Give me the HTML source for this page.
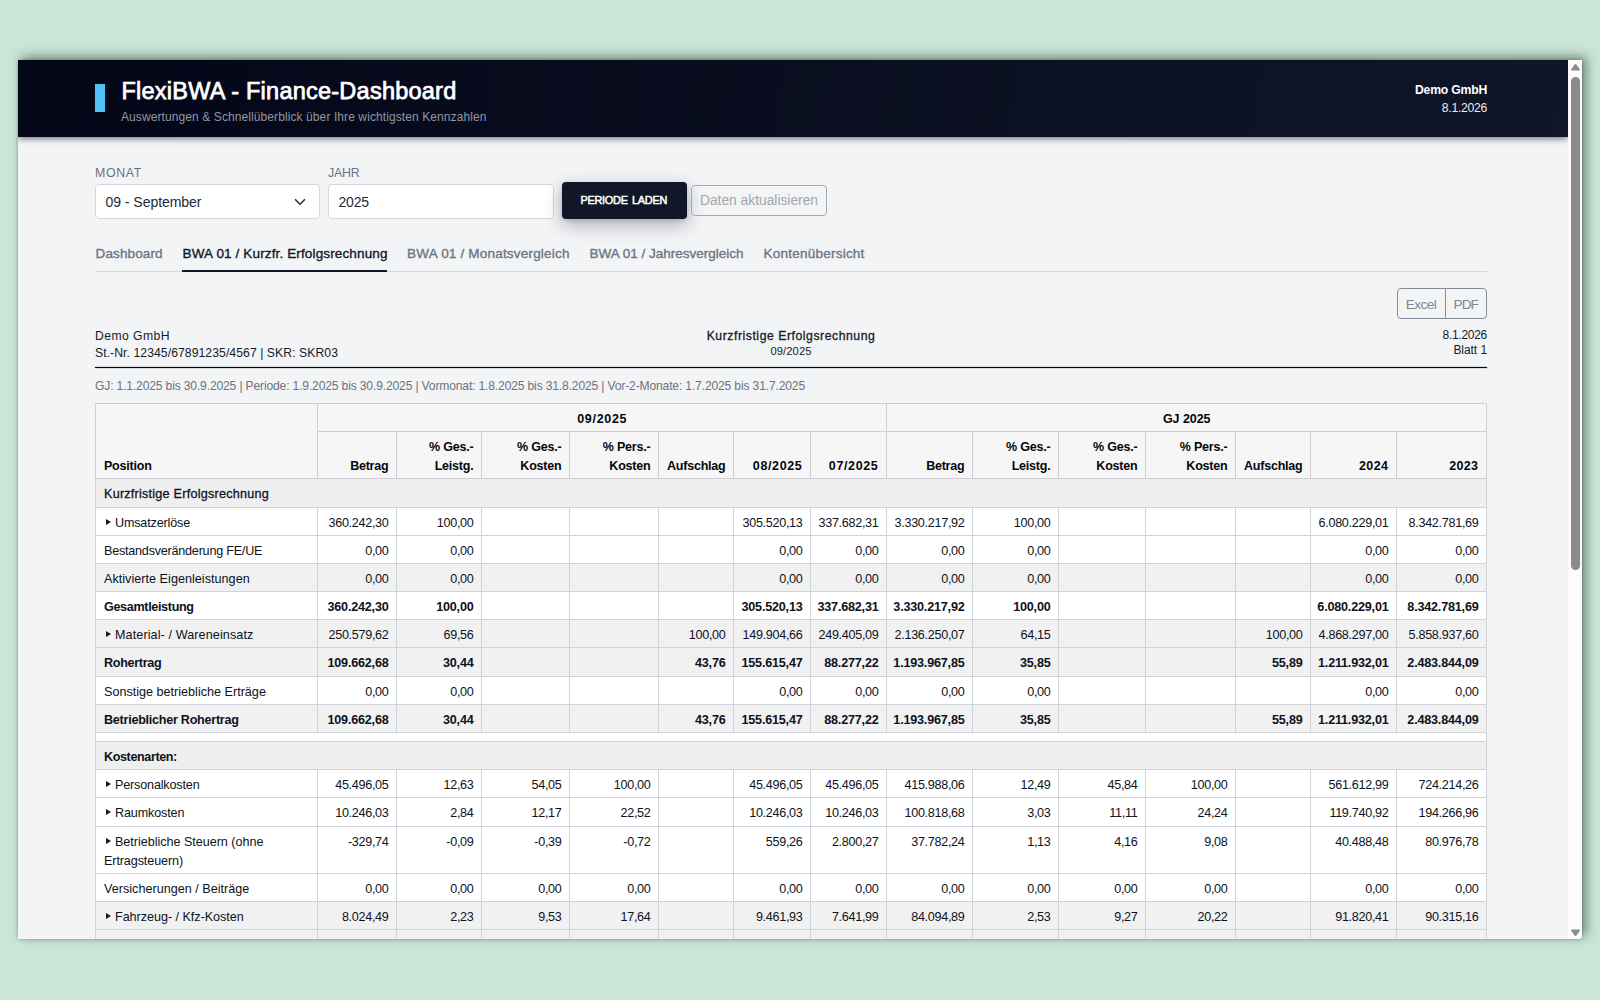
<!DOCTYPE html>
<html lang="de">
<head>
<meta charset="utf-8">
<title>FlexiBWA - Finance-Dashboard</title>
<style>
*{box-sizing:border-box}
html,body{margin:0;padding:0}
body{width:1600px;height:1000px;overflow:hidden;background:#c9e6d7;font-family:"Liberation Sans",Arial,sans-serif;color:#111827;position:relative}
.win{position:absolute;left:18px;top:60px;width:1564px;height:879px;background:#f3f4f6;overflow:hidden;border-radius:0 0 4px 0}
.winshadow{position:absolute;left:18px;top:60px;width:1564px;height:879px;border-radius:0 0 4px 0;box-shadow:4px -3px 12px rgba(0,0,0,.45),0 0 3px rgba(0,0,0,.25)}
.abs{position:absolute;left:-18px;top:-60px;width:1600px;height:1000px}
.abs>*{position:absolute}
.t{white-space:nowrap;line-height:1}
h1,p{margin:0}
button{font-family:inherit;padding:0;margin:0;border:0;background:none;letter-spacing:0}
header.top{left:18px;top:60px;width:1550px;height:77px;background:linear-gradient(100deg,#030617 0%,#101628 100%);box-shadow:0 1.5px 6px rgba(15,23,42,.55)}
.bar{left:95px;top:84px;width:10px;height:28px;background:#4fc1f6}
.title{left:121.5px;top:77px;font-size:23.5px;font-weight:400;-webkit-text-stroke:.75px #fff;color:#fff;line-height:28px}
.sub{left:121px;top:110px;font-size:12px;color:#9197a3;line-height:14px}
.hr1{right:113px;top:83px;font-size:12.2px;font-weight:700;color:#fff;line-height:14px;text-align:right}
.hr2{right:113px;top:101px;font-size:12.2px;color:#e9ebef;line-height:14px;text-align:right}
.lbl{font-size:12.4px;color:#6b7280;line-height:14px;top:165.5px}
.field{top:184px;height:35px;background:#fff;border:1px solid #d3d6db;border-radius:4px;font-size:14px;line-height:34px;padding-left:9.5px;color:#1f2937}
.btn1{left:562px;top:182px;width:125px;height:36.5px;background:#111728;border-radius:4px;color:#fff;font-weight:400;-webkit-text-stroke:.5px #fff;font-size:10.9px;word-spacing:1.5px;line-height:36.5px;text-align:center;padding-right:1.5px;box-shadow:0 6px 18px rgba(15,23,42,.3),0 2px 5px rgba(15,23,42,.12)}
.btn2{left:691px;top:185px;width:136px;height:31px;border:1px solid #a3a8af;border-radius:4px;color:#a1a6ad;font-size:13.8px;line-height:30px;text-align:center}
.tab{top:246px;font-size:13.5px;font-weight:400;-webkit-text-stroke:.35px currentColor;color:#6d7582;margin-left:.6px;line-height:16px}
.tab.on{color:#111827}
.tabline{left:95px;top:271px;width:1392px;height:1px;background:#d6d9de}
.tabon{left:182px;top:269.5px;width:205px;height:2.5px;background:#111827}
.grpbtn{left:1397px;top:288px;width:90px;height:31px;border:1px solid #858d99;border-radius:4px;color:#7d8694;font-size:13.6px;line-height:32.6px}
.grpbtn span{position:absolute;top:0}
.grpbtn i{position:absolute;left:47px;top:0;width:1px;height:29px;background:#858d99}
.inf{font-size:12.2px;line-height:14px;color:#161b26}
.rule{left:95px;top:367px;width:1392px;height:1px;background:#05070b;box-shadow:0 0 0 .2px rgba(0,0,0,.5)}
.per{left:95px;top:379px;font-size:12.1px;line-height:14px;color:#6b7280}
/* table */
.tblwrap{left:95px;top:403px;width:1392px}
table.bwa{border-collapse:collapse;table-layout:fixed;width:1392px;font-size:12.6px;line-height:19px;color:#0d1220;background:#fff}
table.bwa th,table.bwa td{border:1px solid #d1d3da;padding:0 7.5px 0 8px;text-align:right;vertical-align:top;white-space:nowrap;overflow:hidden}
table.bwa th{padding-right:7.6px;background:#f6f6f7;font-weight:700;vertical-align:bottom;padding-bottom:1.8px;color:#05070c;border-color:#cfcfd3;font-size:12.5px;letter-spacing:-.22px}
table.bwa th.pos{text-align:left}
table.bwa th.grp{text-align:center;vertical-align:middle;padding-bottom:0;padding-top:4px}
table.bwa td{padding-top:6px;padding-left:3px;letter-spacing:-.3px}
table.bwa td.l{padding-left:8px;text-align:left;letter-spacing:0;white-space:normal}
table.bwa tr.g td{background:#f1f1f2}
table.bwa tr.sec td{padding-left:8px;background:#efeff0;text-align:left;letter-spacing:0;-webkit-text-stroke:.3px #111827}
table.bwa tr.b td{font-weight:700;letter-spacing:-.2px}
table.bwa tr.sec.b td{-webkit-text-stroke:0}
table.bwa tr.sp td{padding:0}
.tri{display:inline-block;width:0;height:0;border-left:5.2px solid #111827;border-top:3px solid transparent;border-bottom:3px solid transparent;margin:0 3.6px 2.3px 2.4px}
/* scrollbar */
.sbar{left:1568px;top:60px;width:14px;height:879px;background:#fcfcfc}
.sthumb{left:1571px;top:77px;width:9px;height:493px;border-radius:4.5px;background:#8b8b8b}
</style>
</head>
<body>
<div class="winshadow"></div>
<div class="win"><div class="abs">

<header class="top"></header>
<div class="bar"></div>
<h1 class="title t"><span style="letter-spacing:0.241px">FlexiBWA - Finance-Dashboard</span></h1>
<p class="sub t"><span style="letter-spacing:0.093px">Auswertungen &amp; Schnellüberblick über Ihre wichtigsten Kennzahlen</span></p>
<div class="hr1 t"><span style="letter-spacing:-0.201px">Demo GmbH</span></div>
<div class="hr2 t"><span style="letter-spacing:-0.282px">8.1.2026</span></div>

<label class="lbl t" style="left:95px"><span style="letter-spacing:0.634px">MONAT</span></label>
<label class="lbl t" style="left:328px"><span style="letter-spacing:-0.240px">JAHR</span></label>
<div class="field t" style="left:95px;width:225px"><span style="letter-spacing:-0.036px">09 - September</span>
<svg style="position:absolute;left:197px;top:12px" width="14" height="10" viewBox="0 0 14 10"><path d="M2.5 2.75 L7 7.25 L11.5 2.75" fill="none" stroke="#34383e" stroke-width="1.75" stroke-linecap="round" stroke-linejoin="round"/></svg>
</div>
<div class="field t" style="left:328px;width:225.5px"><span style="letter-spacing:-0.164px">2025</span></div>
<button type="button" class="btn1 t"><span style="letter-spacing:-0.251px">PERIODE LADEN</span></button>
<button type="button" class="btn2 t" disabled><span style="letter-spacing:-0.006px">Daten aktualisieren</span></button>

<a class="tab t" style="left:95px"><span style="letter-spacing:0.106px">Dashboard</span></a>
<a class="tab on t" style="left:182px"><span style="letter-spacing:0.137px">BWA 01 / Kurzfr. Erfolgsrechnung</span></a>
<a class="tab t" style="left:406.5px"><span style="letter-spacing:0.195px">BWA 01 / Monatsvergleich</span></a>
<a class="tab t" style="left:589px"><span style="letter-spacing:-0.012px">BWA 01 / Jahresvergleich</span></a>
<a class="tab t" style="left:763px"><span style="letter-spacing:0.228px">Kontenübersicht</span></a>
<div class="tabline"></div>
<div class="tabon"></div>

<div class="grpbtn t"><span style="left:7.8px"><span style="letter-spacing:-0.550px">Excel</span></span><i></i><span style="left:55.6px"><span style="letter-spacing:-0.996px">PDF</span></span></div>

<div class="inf t" style="left:95px;top:329px"><span style="letter-spacing:0.432px">Demo GmbH</span></div>
<div class="inf t" style="left:95px;top:346px"><span style="letter-spacing:0.067px">St.-Nr. 12345/67891235/4567 | SKR: SKR03</span></div>
<div class="inf t" style="left:591px;width:400px;top:328.5px;text-align:center;-webkit-text-stroke:.3px #161b26"><span style="letter-spacing:0.554px">Kurzfristige Erfolgsrechnung</span></div>
<div class="inf t" style="left:591px;width:400px;top:344.3px;text-align:center;font-size:11.2px"><span style="letter-spacing:0.107px">09/2025</span></div>
<div class="inf t" style="right:113px;top:327.8px;text-align:right;font-size:12px"><span style="letter-spacing:-0.290px">8.1.2026</span></div>
<div class="inf t" style="right:113px;top:343.3px;text-align:right;font-size:12px"><span style="letter-spacing:-0.062px">Blatt 1</span></div>
<div class="rule"></div>
<div class="per t"><span style="letter-spacing:-0.156px">GJ: 1.1.2025 bis 30.9.2025 | Periode: 1.9.2025 bis 30.9.2025 | Vormonat: 1.8.2025 bis 31.8.2025 | Vor-2-Monate: 1.7.2025 bis 31.7.2025</span></div>

<div class="tblwrap">
<table class="bwa"><colgroup>
<col style="width:222px">
<col style="width:79px">
<col style="width:85px">
<col style="width:88px">
<col style="width:89px">
<col style="width:75px">
<col style="width:77px">
<col style="width:76px">
<col style="width:86px">
<col style="width:86px">
<col style="width:87px">
<col style="width:90px">
<col style="width:75px">
<col style="width:86px">
<col style="width:90px">
</colgroup><thead>
<tr style="height:28px"><th rowspan="2" class="pos">Position</th><th colspan="7" class="grp"><span style="letter-spacing:0.688px">09/2025</span></th><th colspan="7" class="grp"><span style="letter-spacing:-0.067px">GJ 2025</span></th></tr>
<tr style="height:47px"><th>Betrag</th><th>% Ges.-<br>Leistg.</th><th>% Ges.-<br>Kosten</th><th>% Pers.-<br>Kosten</th><th>Aufschlag</th><th><span style="letter-spacing:0.630px">08/2025</span></th><th><span style="letter-spacing:0.630px">07/2025</span></th><th>Betrag</th><th>% Ges.-<br>Leistg.</th><th>% Ges.-<br>Kosten</th><th>% Pers.-<br>Kosten</th><th>Aufschlag</th><th><span style="letter-spacing:0.397px">2024</span></th><th><span style="letter-spacing:0.347px">2023</span></th></tr>
</thead><tbody>
<tr class="sec" style="height:29px"><td colspan="15"><span style="letter-spacing:0.239px">Kurzfristige Erfolgsrechnung</span></td></tr>
<tr class="w" style="height:28px"><td class="l"><span class="tri"></span><span style="letter-spacing:-0.165px">Umsatzerlöse</span></td><td>360.242,30</td><td>100,00</td><td></td><td></td><td></td><td>305.520,13</td><td>337.682,31</td><td>3.330.217,92</td><td>100,00</td><td></td><td></td><td></td><td>6.080.229,01</td><td>8.342.781,69</td></tr>
<tr class="w" style="height:28px"><td class="l"><span style="letter-spacing:-0.225px">Bestandsveränderung FE/UE</span></td><td>0,00</td><td>0,00</td><td></td><td></td><td></td><td>0,00</td><td>0,00</td><td>0,00</td><td>0,00</td><td></td><td></td><td></td><td>0,00</td><td>0,00</td></tr>
<tr class="g" style="height:28px"><td class="l"><span style="letter-spacing:0.030px">Aktivierte Eigenleistungen</span></td><td>0,00</td><td>0,00</td><td></td><td></td><td></td><td>0,00</td><td>0,00</td><td>0,00</td><td>0,00</td><td></td><td></td><td></td><td>0,00</td><td>0,00</td></tr>
<tr class="w b" style="height:28px"><td class="l"><span style="letter-spacing:-0.342px">Gesamtleistung</span></td><td>360.242,30</td><td>100,00</td><td></td><td></td><td></td><td>305.520,13</td><td>337.682,31</td><td>3.330.217,92</td><td>100,00</td><td></td><td></td><td></td><td>6.080.229,01</td><td>8.342.781,69</td></tr>
<tr class="g" style="height:28px"><td class="l"><span class="tri"></span><span style="letter-spacing:0.099px">Material- / Wareneinsatz</span></td><td>250.579,62</td><td>69,56</td><td></td><td></td><td>100,00</td><td>149.904,66</td><td>249.405,09</td><td>2.136.250,07</td><td>64,15</td><td></td><td></td><td>100,00</td><td>4.868.297,00</td><td>5.858.937,60</td></tr>
<tr class="g b" style="height:29px"><td class="l"><span style="letter-spacing:-0.321px">Rohertrag</span></td><td>109.662,68</td><td>30,44</td><td></td><td></td><td>43,76</td><td>155.615,47</td><td>88.277,22</td><td>1.193.967,85</td><td>35,85</td><td></td><td></td><td>55,89</td><td>1.211.932,01</td><td>2.483.844,09</td></tr>
<tr class="w" style="height:28px"><td class="l"><span style="letter-spacing:0.006px">Sonstige betriebliche Erträge</span></td><td>0,00</td><td>0,00</td><td></td><td></td><td></td><td>0,00</td><td>0,00</td><td>0,00</td><td>0,00</td><td></td><td></td><td></td><td>0,00</td><td>0,00</td></tr>
<tr class="g b" style="height:28px"><td class="l"><span style="letter-spacing:-0.260px">Betrieblicher Rohertrag</span></td><td>109.662,68</td><td>30,44</td><td></td><td></td><td>43,76</td><td>155.615,47</td><td>88.277,22</td><td>1.193.967,85</td><td>35,85</td><td></td><td></td><td>55,89</td><td>1.211.932,01</td><td>2.483.844,09</td></tr>
<tr class="sp" style="height:9px"><td colspan="15"></td></tr>
<tr class="sec b" style="height:28px"><td colspan="15"><span style="letter-spacing:-0.398px">Kostenarten:</span></td></tr>
<tr class="w" style="height:28px"><td class="l"><span class="tri"></span><span style="letter-spacing:-0.165px">Personalkosten</span></td><td>45.496,05</td><td>12,63</td><td>54,05</td><td>100,00</td><td></td><td>45.496,05</td><td>45.496,05</td><td>415.988,06</td><td>12,49</td><td>45,84</td><td>100,00</td><td></td><td>561.612,99</td><td>724.214,26</td></tr>
<tr class="w" style="height:29px"><td class="l"><span class="tri"></span><span style="letter-spacing:-0.140px">Raumkosten</span></td><td>10.246,03</td><td>2,84</td><td>12,17</td><td>22,52</td><td></td><td>10.246,03</td><td>10.246,03</td><td>100.818,68</td><td>3,03</td><td>11,11</td><td>24,24</td><td></td><td>119.740,92</td><td>194.266,96</td></tr>
<tr class="w" style="height:47px"><td class="l"><span class="tri"></span><span style="letter-spacing:-0.028px">Betriebliche Steuern (ohne</span><br><span style="letter-spacing:-0.107px">Ertragsteuern)</span></td><td>-329,74</td><td>-0,09</td><td>-0,39</td><td>-0,72</td><td></td><td>559,26</td><td>2.800,27</td><td>37.782,24</td><td>1,13</td><td>4,16</td><td>9,08</td><td></td><td>40.488,48</td><td>80.976,78</td></tr>
<tr class="w" style="height:28px"><td class="l"><span style="letter-spacing:0.015px">Versicherungen / Beiträge</span></td><td>0,00</td><td>0,00</td><td>0,00</td><td>0,00</td><td></td><td>0,00</td><td>0,00</td><td>0,00</td><td>0,00</td><td>0,00</td><td>0,00</td><td></td><td>0,00</td><td>0,00</td></tr>
<tr class="g" style="height:28px"><td class="l"><span class="tri"></span><span style="letter-spacing:-0.034px">Fahrzeug- / Kfz-Kosten</span></td><td>8.024,49</td><td>2,23</td><td>9,53</td><td>17,64</td><td></td><td>9.461,93</td><td>7.641,99</td><td>84.094,89</td><td>2,53</td><td>9,27</td><td>20,22</td><td></td><td>91.820,41</td><td>90.315,16</td></tr>
<tr class="g" style="height:29px"><td class="l"></td><td></td><td></td><td></td><td></td><td></td><td></td><td></td><td></td><td></td><td></td><td></td><td></td><td></td><td></td></tr>
</tbody></table>
</div>

<div class="sbar"></div>
<svg style="left:1570px;top:63px" width="11" height="9" viewBox="0 0 11 9"><polygon points="5.5,1.8 9.2,6.7 1.8,6.7" fill="#8b8b8b" stroke="#8b8b8b" stroke-width="1.6" stroke-linejoin="round"/></svg>
<div class="sthumb"></div>
<svg style="left:1570px;top:928px" width="11" height="9" viewBox="0 0 11 9"><polygon points="5.5,7.2 9.2,2.3 1.8,2.3" fill="#8b8b8b" stroke="#8b8b8b" stroke-width="1.6" stroke-linejoin="round"/></svg>
</div></div>
</body>
</html>
